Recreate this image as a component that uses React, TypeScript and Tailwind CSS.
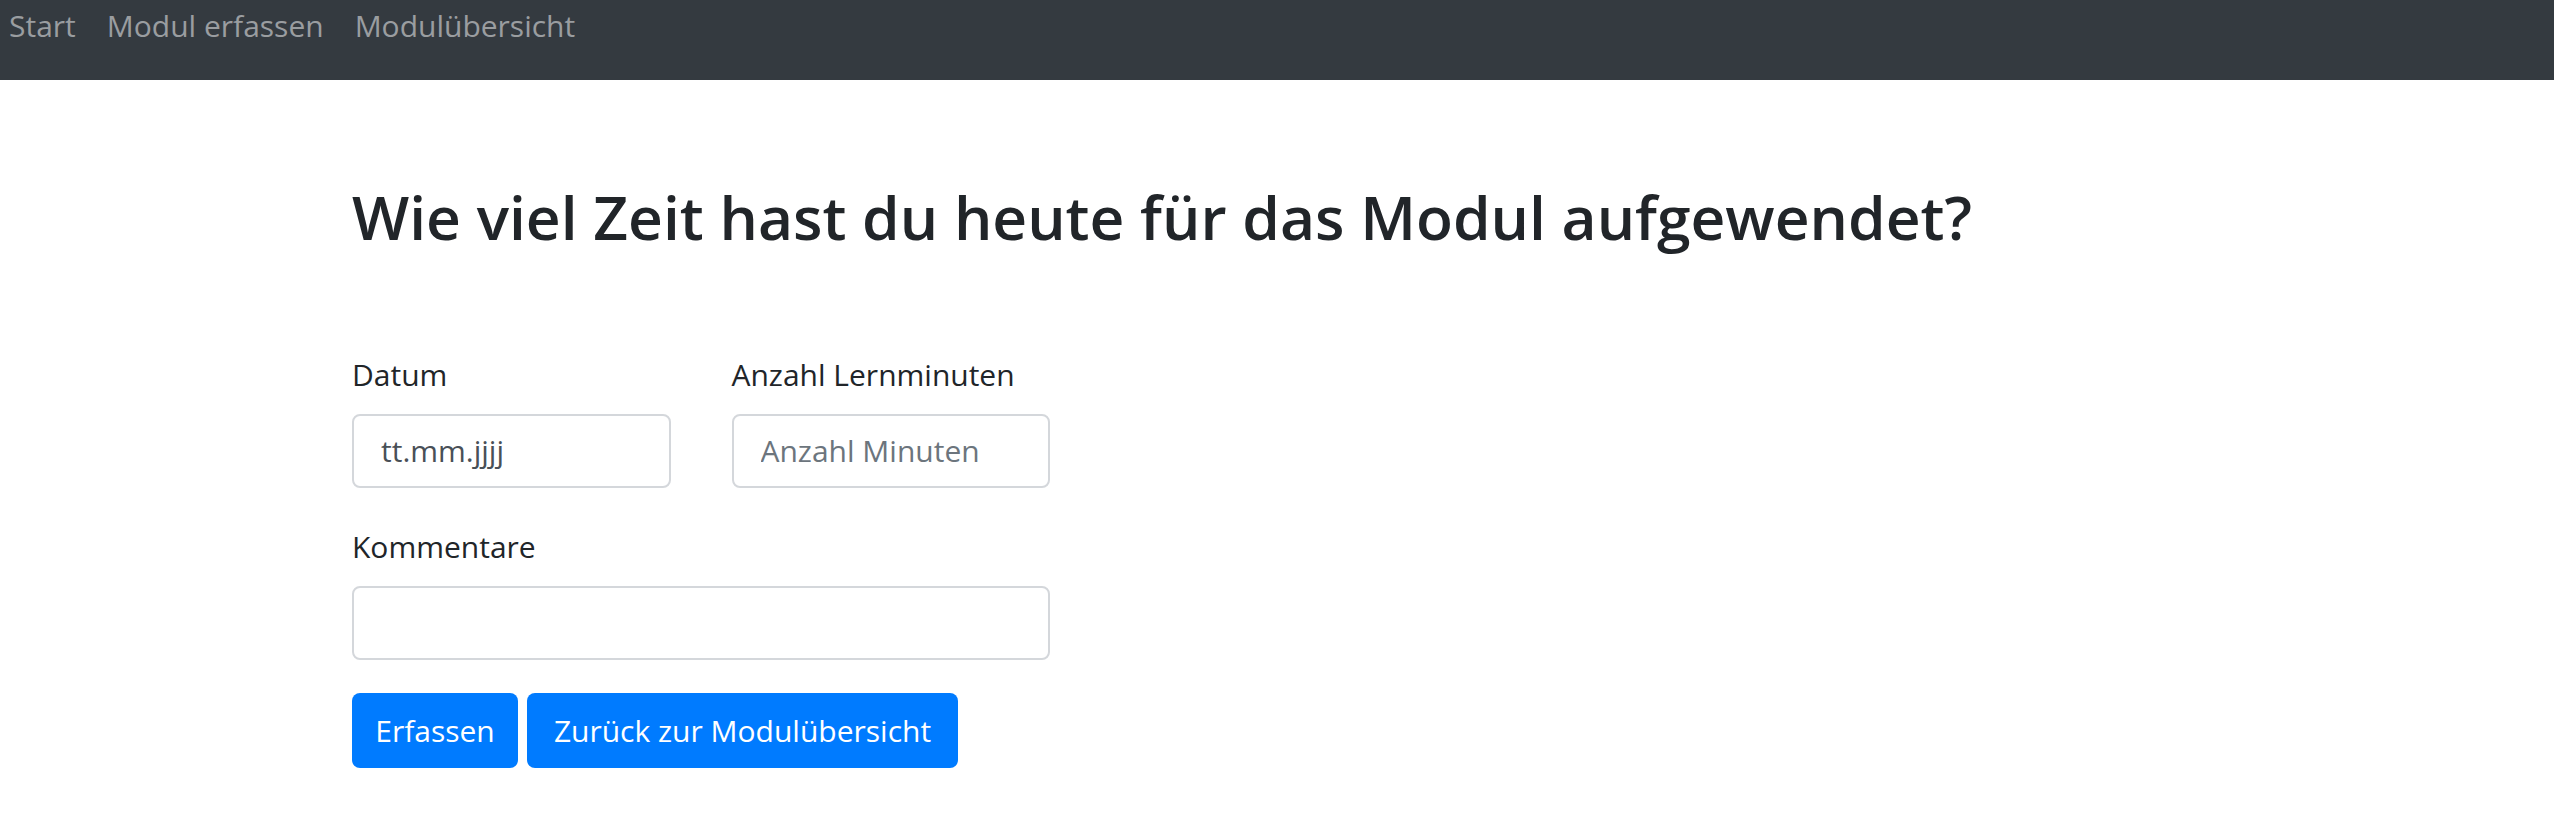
import React from 'react';

const navLinks = ['Start', 'Modul erfassen', 'Modulübersicht'];

const inputCls =
  'h-[74px] w-full rounded-[8px] border-2 border-[#d4d7db] bg-white px-[27px] text-[30px] text-[#495057] outline-none placeholder:text-[#6c757d]';

export default function App() {
  return (
    <div className="min-h-screen bg-white font-['Open_Sans',sans-serif] text-[#212529]">
      {/* Navbar */}
      <nav className="h-[80px] bg-[#343a40]">
        <ul className="flex gap-[31px] pl-[9px] pt-[3px]">
          {navLinks.map((l) => (
            <li key={l}>
              <a href="#" className="text-[30px] leading-[45px] text-[#9a9da0]">
                {l}
              </a>
            </li>
          ))}
        </ul>
      </nav>

      <main className="mx-auto w-[1850px]">
        <h1 className="mt-[101px] text-[60.5px] font-semibold leading-[1.2]">
          Wie viel Zeit hast du heute für das Modul aufgewendet?
        </h1>

        <form className="mt-[98px] w-[698px]" onSubmit={(e) => e.preventDefault()}>
          <div className="grid grid-cols-2 gap-x-[61px]">
            <div>
              <label className="block text-[30px] leading-[45px]">Datum</label>
              <input type="text" defaultValue="tt.mm.jjjj" className={`${inputCls} mt-[17px]`} />
            </div>
            <div>
              <label className="block text-[30px] leading-[45px]">Anzahl Lernminuten</label>
              <input type="text" placeholder="Anzahl Minuten" className={`${inputCls} mt-[17px]`} />
            </div>
          </div>

          <div className="mt-[36px]">
            <label className="block text-[30px] leading-[45px]">Kommentare</label>
            <input type="text" className={`${inputCls} mt-[17px]`} />
          </div>

          <div className="mt-[33px] flex gap-[9px]">
            <button
              type="submit"
              className="h-[75px] w-[166px] rounded-[8px] bg-[#007bff] text-[30px] text-white"
            >
              Erfassen
            </button>
            <button
              type="button"
              className="h-[75px] w-[431px] rounded-[8px] bg-[#007bff] text-[30px] text-white"
            >
              Zurück zur Modulübersicht
            </button>
          </div>
        </form>
      </main>
    </div>
  );
}
